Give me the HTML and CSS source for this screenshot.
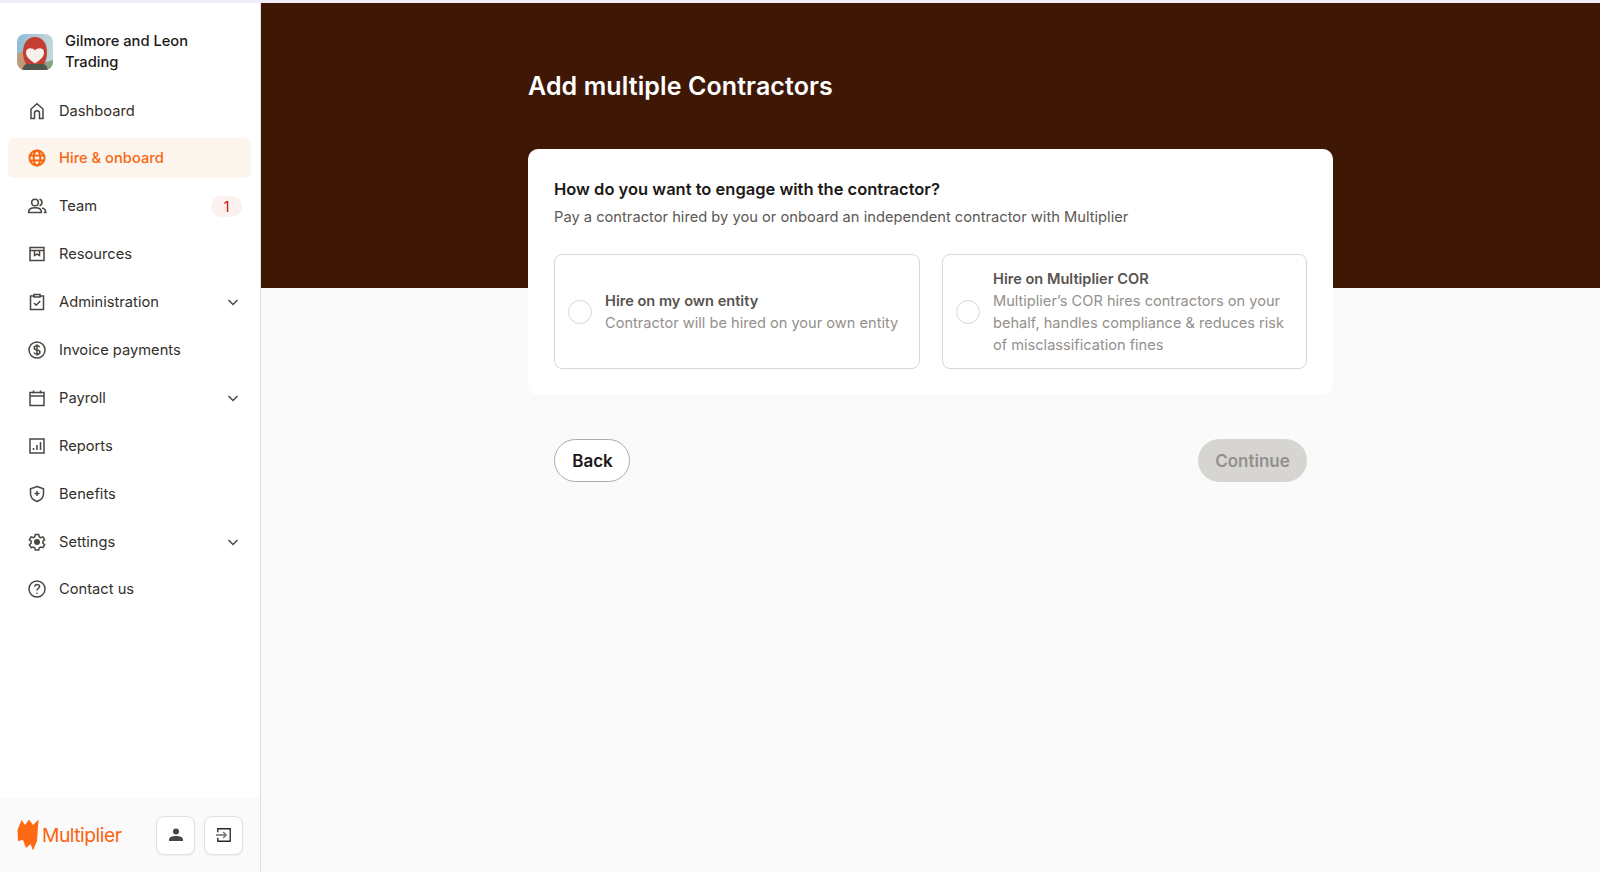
FILE: index.html
```html
<!DOCTYPE html>
<html lang="en">
<head>
<meta charset="utf-8">
<title>Add multiple Contractors</title>
<link rel="stylesheet" href="styles.css">
</head>
<body>
<div class="strip"></div>
<div class="app">
  <aside class="sidebar">
    <div class="company">
      <svg class="avatar" viewBox="0 0 36 36">
        <defs><clipPath id="av"><rect width="36" height="36" rx="8"/></clipPath>
        <linearGradient id="sky" x1="0" y1="0" x2="1" y2="0"><stop offset="0" stop-color="#8fbcd6"/><stop offset="1" stop-color="#c6d6dc"/></linearGradient></defs>
        <g clip-path="url(#av)">
          <rect width="36" height="36" fill="url(#sky)"/>
          <path d="M0 20l6-3 4 19H0z" fill="#c29a7a"/>
          <path d="M26 29l10-3v10H26z" fill="#8aa383"/>
          <path d="M5 36c1-5 5-8 13-8s12 3 13 8z" fill="#4f574d"/>
          <path d="M18 3c8 0 12 7 12 15 0 5-1 9-3 12H9c-2-3-3-7-3-12C6 10 10 3 18 3z" fill="#c43f33"/>
          <path d="M18 16.500c2-3 9-3.500 9 2 0 5-5 8-9 11-4-3-9-6-9-11 0-5.500 7-5 9-2z" fill="#f7f1ee"/>
        </g>
      </svg>
      <div class="company-name">Gilmore and Leon Trading</div>
    </div>
    <nav class="nav">
      <a class="nav-item"><svg class="ico" viewBox="0 0 20 20"><path d="M4 17.500V8L10 2.800 16 8v9.500h-3.500v-5.200a2.500 2.500 0 0 0-5 0v5.200z"/></svg><span class="label">Dashboard</span></a>
      <a class="nav-item active"><svg class="ico" viewBox="0 0 20 20"><circle cx="10" cy="10" r="7.500"/><ellipse cx="10" cy="10" rx="3.300" ry="7.500"/><path d="M2.500 7.500h15M2.500 12.500h15"/></svg><span class="label">Hire &amp; onboard</span></a>
      <a class="nav-item"><svg class="ico" viewBox="0 0 20 20"><circle cx="8" cy="6.500" r="3.300"/><path d="M1.500 16.500c0-3 2.500-4.700 6.500-4.700s6.500 1.700 6.500 4.700z"/><path d="M12.500 3.300a3.300 3.300 0 0 1 0 6.400M15 12c2.300.5 3.800 2 3.800 4.500h-2"/></svg><span class="label">Team</span><span class="badge">1</span></a>
      <a class="nav-item"><svg class="ico" viewBox="0 0 20 20"><rect x="3" y="3.500" width="14" height="13"/><path d="M3 6.500h14M7.500 6.500v5l2.500-1.500 2.500 1.500v-5"/></svg><span class="label">Resources</span></a>
      <a class="nav-item"><svg class="ico" viewBox="0 0 20 20"><path d="M7 4H3.500v13.500h13V4H13"/><path d="M7 2.500h6V5H7zM7 11l2.200 2.200L13.200 9"/></svg><span class="label">Administration</span><svg class="chev" viewBox="0 0 12 12"><path d="M1.500 4l4.500 4.500L10.500 4"/></svg></a>
      <a class="nav-item"><svg class="ico" viewBox="0 0 20 20"><circle cx="10" cy="10" r="8"/><path d="M12.800 7.300C12.300 6.200 11.200 5.800 10 5.800c-1.600 0-2.800.8-2.800 2.100 0 3 5.800 1.300 5.800 4.200 0 1.300-1.300 2.100-3 2.100-1.400 0-2.500-.6-3-1.700M10 4.200v11.600"/></svg><span class="label">Invoice payments</span></a>
      <a class="nav-item"><svg class="ico" viewBox="0 0 20 20"><path d="M3 4.500h14v13H3zM3 8h14M6.500 2.500v3M13.500 2.500v3"/></svg><span class="label">Payroll</span><svg class="chev" viewBox="0 0 12 12"><path d="M1.500 4l4.500 4.500L10.500 4"/></svg></a>
      <a class="nav-item"><svg class="ico" viewBox="0 0 20 20"><rect x="3" y="3" width="14" height="14"/><path d="M6.500 14v-2M10 14V9M13.500 14V6"/></svg><span class="label">Reports</span></a>
      <a class="nav-item"><svg class="ico" viewBox="0 0 20 20"><path d="M10 2.500l6.500 2.300v5c0 3.700-2.600 6.300-6.500 7.700-3.900-1.400-6.500-4-6.500-7.700v-5z"/><path class="thick" d="M10 7v5M7.500 9.500h5"/></svg><span class="label">Benefits</span></a>
      <a class="nav-item"><svg class="ico" viewBox="0 0 20 20"><path d="M8.300 2.500h3.400l.5 2.200 1.500.9 2.200-.7 1.700 3-1.700 1.500v1.800l1.700 1.500-1.700 3-2.200-.7-1.500.9-.5 2.200H8.300l-.5-2.200-1.500-.9-2.200.7-1.700-3 1.700-1.500V9.100L2.400 7.900l1.700-3 2.200.7 1.500-.9z"/><circle class="solid" cx="10" cy="10" r="3"/></svg><span class="label">Settings</span><svg class="chev" viewBox="0 0 12 12"><path d="M1.500 4l4.500 4.500L10.500 4"/></svg></a>
      <a class="nav-item"><svg class="ico" viewBox="0 0 20 20"><circle cx="10" cy="10" r="8"/><path d="M7.700 7.800c0-1.400 1-2.300 2.400-2.300s2.400.9 2.400 2.100c0 1.800-2.500 1.900-2.500 3.900"/><circle class="solid" cx="10" cy="14.200" r=".8"/></svg><span class="label">Contact us</span></a>
    </nav>
    <div class="side-foot">
      <div class="brand">
        <svg class="brand-mark" viewBox="0 0 22 32"><path d="M.5 11L4.500 1 8 6l4-5.500L16 6l5.500-5.500L20 22l-4 9.500L13.500 25 9 29 6 21l-5 1z" fill="#fd6a14"/></svg>
        <span class="brand-name">Multiplier</span>
      </div>
      <div class="foot-actions">
        <button class="foot-btn"><svg class="foot-ico" viewBox="0 0 16 16"><circle cx="8" cy="4.500" r="3" class="fill"/><path class="fill" d="M1 14v-1.500C1 10 4.500 9 8 9s7 1 7 3.500V14z"/></svg></button>
        <button class="foot-btn"><svg class="foot-ico line" viewBox="0 0 18 18"><path d="M2 6V2h14v14H2v-4"/><path class="arrow" d="M0 9h10M8 5.500L11.500 9 8 12.500"/></svg></button>
      </div>
    </div>
  </aside>
  <main class="main">
    <div class="column">
      <h1 class="title">Add multiple Contractors</h1>
      <section class="card">
        <h2 class="q">How do you want to engage with the contractor?</h2>
        <p class="sub">Pay a contractor hired by you or onboard an independent contractor with Multiplier</p>
        <div class="options">
          <label class="option"><span class="radio"></span><span class="opt-text"><strong>Hire on my own entity</strong><span>Contractor will be hired on your own entity</span></span></label>
          <label class="option"><span class="radio"></span><span class="opt-text"><strong>Hire on Multiplier COR</strong><span>Multiplier’s COR hires contractors on your behalf, handles compliance &amp; reduces risk of misclassification fines</span></span></label>
        </div>
      </section>
      <div class="actions">
        <button class="btn back">Back</button>
        <button class="btn next" disabled>Continue</button>
      </div>
    </div>
  </main>
</div>
</body>
</html>
```
FILE: styles.css
```css
* { box-sizing: border-box; }
html, body { height: 100%; }
body { margin: 0; display: flex; flex-direction: column; font-family: Inter, "Liberation Sans", sans-serif; color: #1c1917; background: #fff; overflow: hidden; }
.strip { height: 3px; flex: none; background: #f0eefb; }
.app { flex: 1; display: flex; min-height: 0; }
.sidebar { width: 261px; flex: none; display: flex; flex-direction: column; border-right: 1px solid #e2e1df; background: #fff; }
.company { display: flex; align-items: center; gap: 12px; padding: 14px 16px 0 17px; height: 84px; }
.avatar { width: 36px; height: 36px; flex: none; }
.company-name { font-size: 14.7px; line-height: 21.5px; font-weight: 500; width: 150px; }
.nav { flex: 1; display: flex; flex-direction: column; gap: 7.9px; padding: 0 9px 0 8px; margin-top: 3.5px; }
.nav-item { height: 40px; flex: none; display: flex; align-items: center; gap: 12px; padding: 0 10px 0 19px; border-radius: 6px; font-size: 14.7px; color: #33302c; }
.label { flex: 1; }
.ico { width: 20px; height: 20px; flex: none; fill: none; stroke: #4a4641; stroke-width: 1.500; }
.ico .solid { fill: #4a4641; stroke: none; }
.nav-item.active { background: #fbf5ee; color: #f9650f; font-weight: 500; }
.active .ico { stroke: #f9650f; stroke-width: 2; }
.chev { width: 12px; height: 12px; margin-right: 2px; fill: none; stroke: #4a4641; stroke-width: 1.500; }
.badge { width: 31px; height: 21px; margin-right: -1px; border-radius: 11px; background: #fdf1ef; color: #c0130c; font-size: 14px; text-align: center; line-height: 21px; }
.side-foot { height: 74px; flex: none; background: #fafafa; display: flex; align-items: center; justify-content: space-between; padding: 0 17px; }
.brand { display: flex; align-items: center; gap: 3px; }
.brand-mark { width: 22px; height: 32px; }
.brand-name { font-size: 19.3px; color: #f9650f; letter-spacing: -.5px; }
.foot-actions { display: flex; gap: 9px; }
.foot-btn { width: 39px; height: 39px; padding: 0; display: flex; align-items: center; justify-content: center; background: #fff; border: 1px solid #e2e1df; border-radius: 8px; box-shadow: 0 1px 2px rgba(0,0,0,.06); }
.foot-ico { width: 16px; height: 16px; }
.foot-ico .fill { fill: #4a4641; }
.foot-ico.line { fill: none; stroke: #2a2723; stroke-width: 1.500; }
.foot-ico .arrow { stroke: #6f6b66; }
.main { flex: 1; min-width: 0; background: linear-gradient(#3e1805 285px, #fafafa 285px); display: flex; justify-content: center; }
.column { width: 805px; }
.title { margin: 67px 0 0; font-size: 25px; line-height: 32px; font-weight: 600; color: #fff; letter-spacing: .1px; }
.card { margin-top: 47px; height: 246px; padding: 27.5px 26px; background: #fff; border-radius: 10px; }
.q { margin: 0; font-size: 16.5px; line-height: 24px; font-weight: 600; color: #1c1917; }
.sub { margin: 5px 0 0; font-size: 14.7px; line-height: 22px; color: #5c5854; }
.options { display: grid; grid-template-columns: 366px 365px; gap: 22px; margin-top: 26.5px; }
.option { height: 115px; display: flex; align-items: center; gap: 13px; padding: 0 13px; border: 1px solid #d9d8d6; border-radius: 8px; background: #fff; }
.radio { width: 24px; height: 24px; flex: none; border: 1px solid #d9d8d6; border-radius: 50%; }
.opt-text { display: flex; flex-direction: column; font-size: 14.6px; line-height: 22px; color: #93908c; }
.opt-text strong { font-weight: 600; color: #57534f; }
.actions { display: flex; justify-content: space-between; padding: 0 26px; margin-top: 44px; }
.btn { height: 43px; border-radius: 22px; font: 600 17px Inter, "Liberation Sans", sans-serif; }
.back { width: 76px; padding-left: 7px; background: #fff; border: 1px solid #aeaba8; color: #1c1917; }
.next { width: 109px; background: #d6d5d2; border: 0; color: #93908c; }
```
